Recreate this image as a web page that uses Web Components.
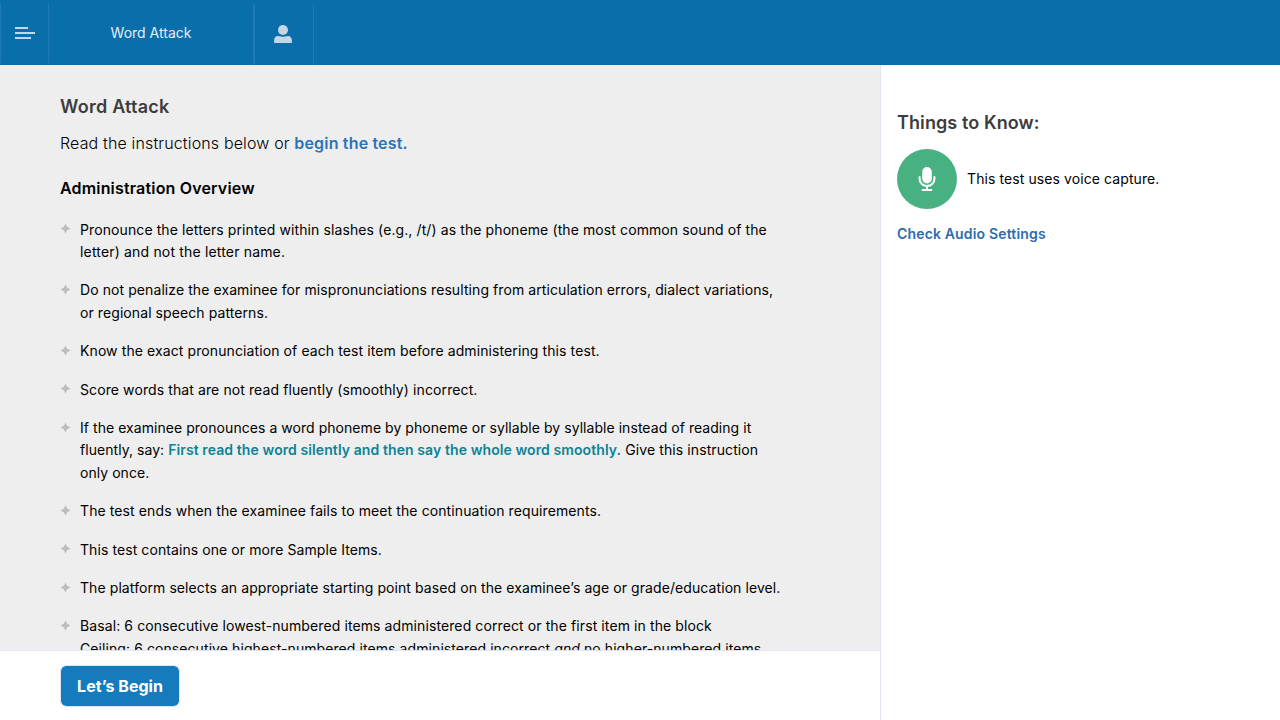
<!DOCTYPE html>
<html lang="en">
<head>
<meta charset="utf-8">
<title>Word Attack</title>
<style>
html, body { margin: 0; height: 100%; overflow: hidden; }
body { font-family: Inter, "Liberation Sans", sans-serif; font-size: 14px; line-height: 22.4px; color: #000; background: #fff; }
</style>
</head>
<body>
<assessment-app></assessment-app>

<script>
const define = (name, html) => customElements.define(name, class extends HTMLElement {
  constructor() {
    super();
    const t = document.createElement('template');
    t.innerHTML = html;
    this.attachShadow({ mode: 'open' }).append(t.content.cloneNode(true));
  }
});

define('top-bar', `
<style>
:host { display: flex; box-sizing: border-box; height: 65px; background: #0a6eab; color: #e4edf4; }
div { box-sizing: border-box; display: flex; align-items: center; justify-content: center; border-right: 1px solid #207bb4; }
.menu { width: 49px; height: 60px; margin-top: 3px; border-left: 1px solid #207bb4; }
.title { width: 205px; height: 60px; margin-top: 3px; font-size: 14px; line-height: 20px; }
.user { width: 60px; height: 60px; margin-top: 5px; padding: 0 2px 2px 0; border-left: 1px solid #207bb4; }
svg { display: block; }
</style>
<div class="menu"><svg width="20" height="12" viewBox="0 0 20 12" fill="#c5d6e4"><path d="M0 0h13v2H0zM0 5h20v2H0zM0 10h16v2H0z"/></svg></div>
<div class="title"><span>Word Attack</span></div>
<div class="user"><svg width="18" height="18" viewBox="0 0 18 18" fill="#c5d6e4"><circle cx="9" cy="5" r="5"/><path d="M0 16.5Q0 11 4 11Q6 11 7 11.4Q9 12 11 11.4Q12 11 14 11Q18 11 18 16.5V17Q18 18 17 18H1Q0 18 0 17Z"/></svg></div>`);

define('section-title', `
<style>
:host { display: block; font-size: 18px; font-weight: 600; line-height: 28px; color: #3c3c3c; }
h2 { margin: 0; font: inherit; }
</style><h2><slot></slot></h2>`);

define('star-item', `
<style>
:host { display: grid; grid-template-columns: 11px 1fr; column-gap: 9px; margin-bottom: 16px; }
svg { display: block; margin-top: 4.6px; }
</style>
<svg width="11" height="11" viewBox="0 0 11 11"><path fill="#bdbdbd" d="M5.5 .2Q6.6 4.4 10.8 5.5Q6.6 6.6 5.5 10.8Q4.4 6.6 .2 5.5Q4.4 4.4 5.5 .2Z"/></svg>
<div><slot></slot></div>`);

define('instruction-panel', `
<style>
:host { display: block; box-sizing: border-box; background: #eee; overflow: hidden; padding: 28px 60px 0; min-height: 0; }
section-title { letter-spacing: .24px; }
p { margin: 8px 0 0; font-size: 16px; line-height: 28px; font-weight: 300; letter-spacing: .145px; }
h3 { margin: 17px 0 16.6px; font-size: 16px; line-height: 28px; font-weight: 600; letter-spacing: .17px; }
.list { width: 725px; letter-spacing: .1px; }
.mid { letter-spacing: .082px; }
.tight { letter-spacing: .048px; }
.say { color: #0d8296; font-weight: 600; letter-spacing: .09px; }
a { color: #2c72b8; font-weight: 600; text-decoration: none; letter-spacing: .17px; }
</style>
<section-title>Word Attack</section-title>
<p>Read the instructions below or <a>begin the test.</a></p>
<h3>Administration Overview</h3>
<div class="list">
<star-item>Pronounce the letters printed within slashes (e.g., /t/) as the phoneme (the most common sound of the<br><span style="letter-spacing:.17px">letter) and not the letter name.</span></star-item>
<star-item class="mid">Do not penalize the examinee for mispronunciations resulting from articulation errors, dialect variations,<br>or regional speech patterns.</star-item>
<star-item>Know the exact pronunciation of each test item before administering this test.</star-item>
<star-item>Score words that are not read fluently (smoothly) incorrect.</star-item>
<star-item><span class="tight">If the examinee pronounces a word phoneme by phoneme or syllable by syllable instead of reading it</span><br><span class="tight">fluently, say:</span> <span class="say">First read the word silently and then say the whole word smoothly.</span> Give this instruction<br><span class="tight">only once.</span></star-item>
<star-item>The test ends when the examinee fails to meet the continuation requirements.</star-item>
<star-item class="mid">This test contains one or more Sample Items.</star-item>
<star-item class="mid">The platform selects an appropriate starting point based on the examinee’s age or grade/education level.</star-item>
<star-item>Basal: 6 consecutive lowest-numbered items administered correct or the first item in the block<br><span class="mid">Ceiling: 6 consecutive highest-numbered items administered incorrect <i>and</i> no higher-numbered items</span></star-item>
</div>`);

define('action-bar', `
<style>
:host { display: flex; align-items: center; box-sizing: border-box; height: 70px; padding: 1px 60px 0; border-top: 1px solid #dfe5f2; background: #fff; }
button { box-sizing: border-box; width: 120px; height: 42px; padding: 0; border: 1px solid #d6e6f2; border-radius: 6px; background: #147bbd; background-clip: padding-box; color: #fff; font: 700 16px/24px Inter, sans-serif; }
</style>
<button><slot></slot></button>`);

define('info-panel', `
<style>
:host { display: block; box-sizing: border-box; padding: 44px 16px; border-left: 1px solid #e3e3f0; background: #fff; letter-spacing: .09px; }
.voice { display: flex; align-items: center; gap: 10px; margin-top: 12px; }
.disc { width: 60px; height: 60px; border-radius: 50%; background: #48b182; display: flex; align-items: center; justify-content: center; }
a { display: block; margin-top: 14px; font-weight: 600; color: #2c6cb0; text-decoration: none; letter-spacing: .16px; }
</style>
<section-title>Things to Know:</section-title>
<div class="voice">
<div class="disc"><svg width="18" height="26" viewBox="0 0 18 26"><rect x="4.2" y="1" width="9.6" height="16.5" rx="4.8" fill="#fff"/><path d="M1.6 11v2.3a7.4 6.8 0 0 0 14.8 0V11M9 20.5v3.4M4.6 24h8.8" fill="none" stroke="#fff" stroke-width="2" stroke-linecap="round"/></svg></div>
<span>This test uses voice capture.</span>
</div>
<a>Check Audio Settings</a>`);

define('assessment-app', `
<style>
:host { display: grid; grid-template: 65px minmax(0, 1fr) / 880px minmax(0, 1fr); height: 100vh; }
top-bar { grid-column: 1 / -1; }
main { display: grid; grid-template-rows: minmax(0, 1fr) 70px; min-height: 0; }
</style>
<top-bar></top-bar>
<main><instruction-panel></instruction-panel><action-bar>Let’s Begin</action-bar></main>
<info-panel></info-panel>`);
</script>
</body>
</html>
